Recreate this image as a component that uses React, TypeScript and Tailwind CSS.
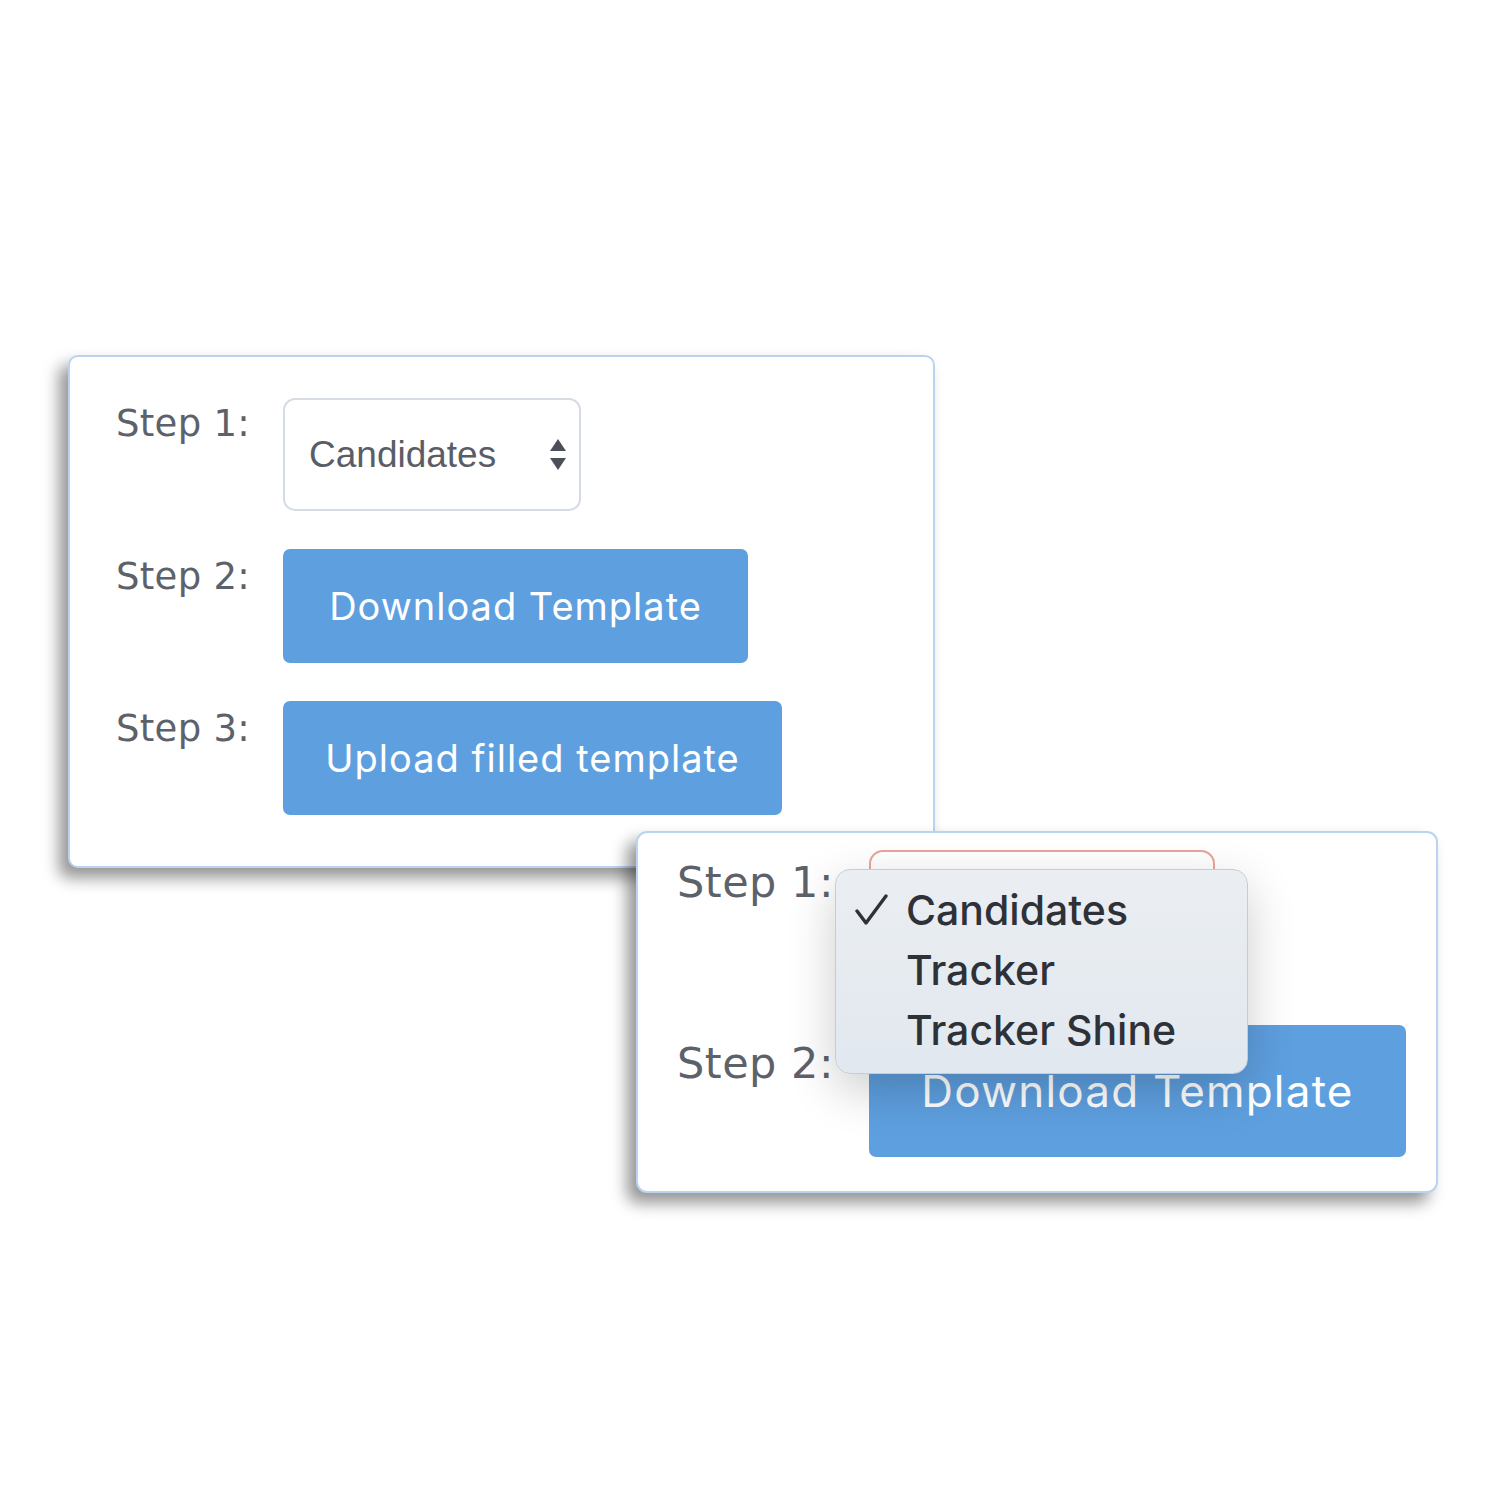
import React from "react";

const stepFont = { fontFamily: '"DejaVu Sans", Verdana, sans-serif' };

function Arrows() {
  return (
    <svg width="18" height="32" viewBox="0 0 18 32" className="shrink-0">
      <polygon points="9,0 17,12 1,12" fill="#4b4f57" />
      <polygon points="1,19 17,19 9,31" fill="#4b4f57" />
    </svg>
  );
}

function Check() {
  return (
    <svg width="34" height="32" viewBox="0 0 34 32" className="shrink-0">
      <polyline
        points="2,17 11,29 31,2"
        fill="none"
        stroke="#2e3238"
        strokeWidth="3.4"
        strokeLinecap="round"
        strokeLinejoin="round"
      />
    </svg>
  );
}

export default function App() {
  return (
    <div className="relative w-[1500px] h-[1500px] bg-white overflow-hidden">
      {/* Card 1 */}
      <div className="absolute left-[68px] top-[355px] w-[867px] h-[513px] bg-white border-2 border-[#b9d3f1] rounded-[10px] shadow-[-9px_10px_16px_rgba(0,0,0,0.42)]">
        <div className="grid grid-cols-[167px_auto] gap-y-[38px] pl-[46px] pt-[41px] items-start">
          <div
            className="text-[37px] leading-[44px] text-[#5d6169] pt-[4px] tracking-[0.3px]"
            style={stepFont}
          >
            Step 1:
          </div>
          <div className="w-[298px] h-[113px] border-2 border-[#d6dce4] rounded-[12px] flex items-center justify-between pl-[24px] pr-[12px]">
            <span
              className="text-[37px] text-[#5a5d65]"
              style={{ fontFamily: '"Liberation Sans", Arial, sans-serif' }}
            >
              Candidates
            </span>
            <Arrows />
          </div>

          <div
            className="text-[37px] leading-[44px] text-[#5d6169] pt-[6px] tracking-[0.3px]"
            style={stepFont}
          >
            Step 2:
          </div>
          <div className="w-[465px] h-[114px] bg-[#5e9fdf] rounded-[7px] flex items-center justify-center">
            <span
              className="text-[38px] text-white tracking-[1px]"
              style={{ fontFamily: 'Inter, sans-serif' }}
            >
              Download Template
            </span>
          </div>

          <div
            className="text-[37px] leading-[44px] text-[#5d6169] pt-[6px] tracking-[0.3px]"
            style={stepFont}
          >
            Step 3:
          </div>
          <div className="w-[499px] h-[114px] bg-[#5e9fdf] rounded-[7px] flex items-center justify-center">
            <span
              className="text-[38px] text-white tracking-[1px]"
              style={{ fontFamily: 'Inter, sans-serif' }}
            >
              Upload filled template
            </span>
          </div>
        </div>
      </div>

      {/* Card 2 */}
      <div className="absolute left-[636px] top-[831px] w-[802px] h-[362px] bg-white border-2 border-[#b9d3f1] rounded-[11px] shadow-[-9px_10px_16px_rgba(0,0,0,0.42)]">
        <div className="grid grid-cols-[192px_auto] gap-y-[43px] pl-[39px] pt-[17px] items-start">
          <div
            className="text-[43px] leading-[52px] text-[#5d6169] pt-[6px] tracking-[0.5px]"
            style={stepFont}
          >
            Step 1:
          </div>
          <div className="w-[346px] h-[132px] border-2 border-[#e9a49c] rounded-[14px]" />

          <div
            className="text-[43px] leading-[52px] text-[#5d6169] pt-[12px] tracking-[0.5px]"
            style={stepFont}
          >
            Step 2:
          </div>
          <div className="w-[537px] h-[132px] bg-[#5e9fdf] rounded-[7px] flex items-center justify-center">
            <span
              className="text-[44px] text-white tracking-[1.2px]"
              style={{ fontFamily: 'Inter, sans-serif' }}
            >
              Download Template
            </span>
          </div>
        </div>

        {/* Dropdown menu */}
        <div className="absolute left-[197px] top-[36px] w-[413px] h-[205px] rounded-[15px] border border-[#c7ccd2] bg-gradient-to-b from-[#ebeef2] to-[#e1e8ef] shadow-[0_16px_48px_rgba(0,0,0,0.2)] pl-[19px] pt-[10px]">
          {[
            { label: "Candidates", checked: true },
            { label: "Tracker", checked: false },
            { label: "Tracker Shine", checked: false },
          ].map((it) => (
            <div key={it.label} className="flex items-center h-[60px]">
              <div className="w-[51px] flex items-center">
                {it.checked ? <Check /> : null}
              </div>
              <span
                className="text-[41px] leading-[60px] font-medium text-[#2e3238]"
                style={{ fontFamily: 'Inter, "Liberation Sans", sans-serif' }}
              >
                {it.label}
              </span>
            </div>
          ))}
        </div>
      </div>
    </div>
  );
}
